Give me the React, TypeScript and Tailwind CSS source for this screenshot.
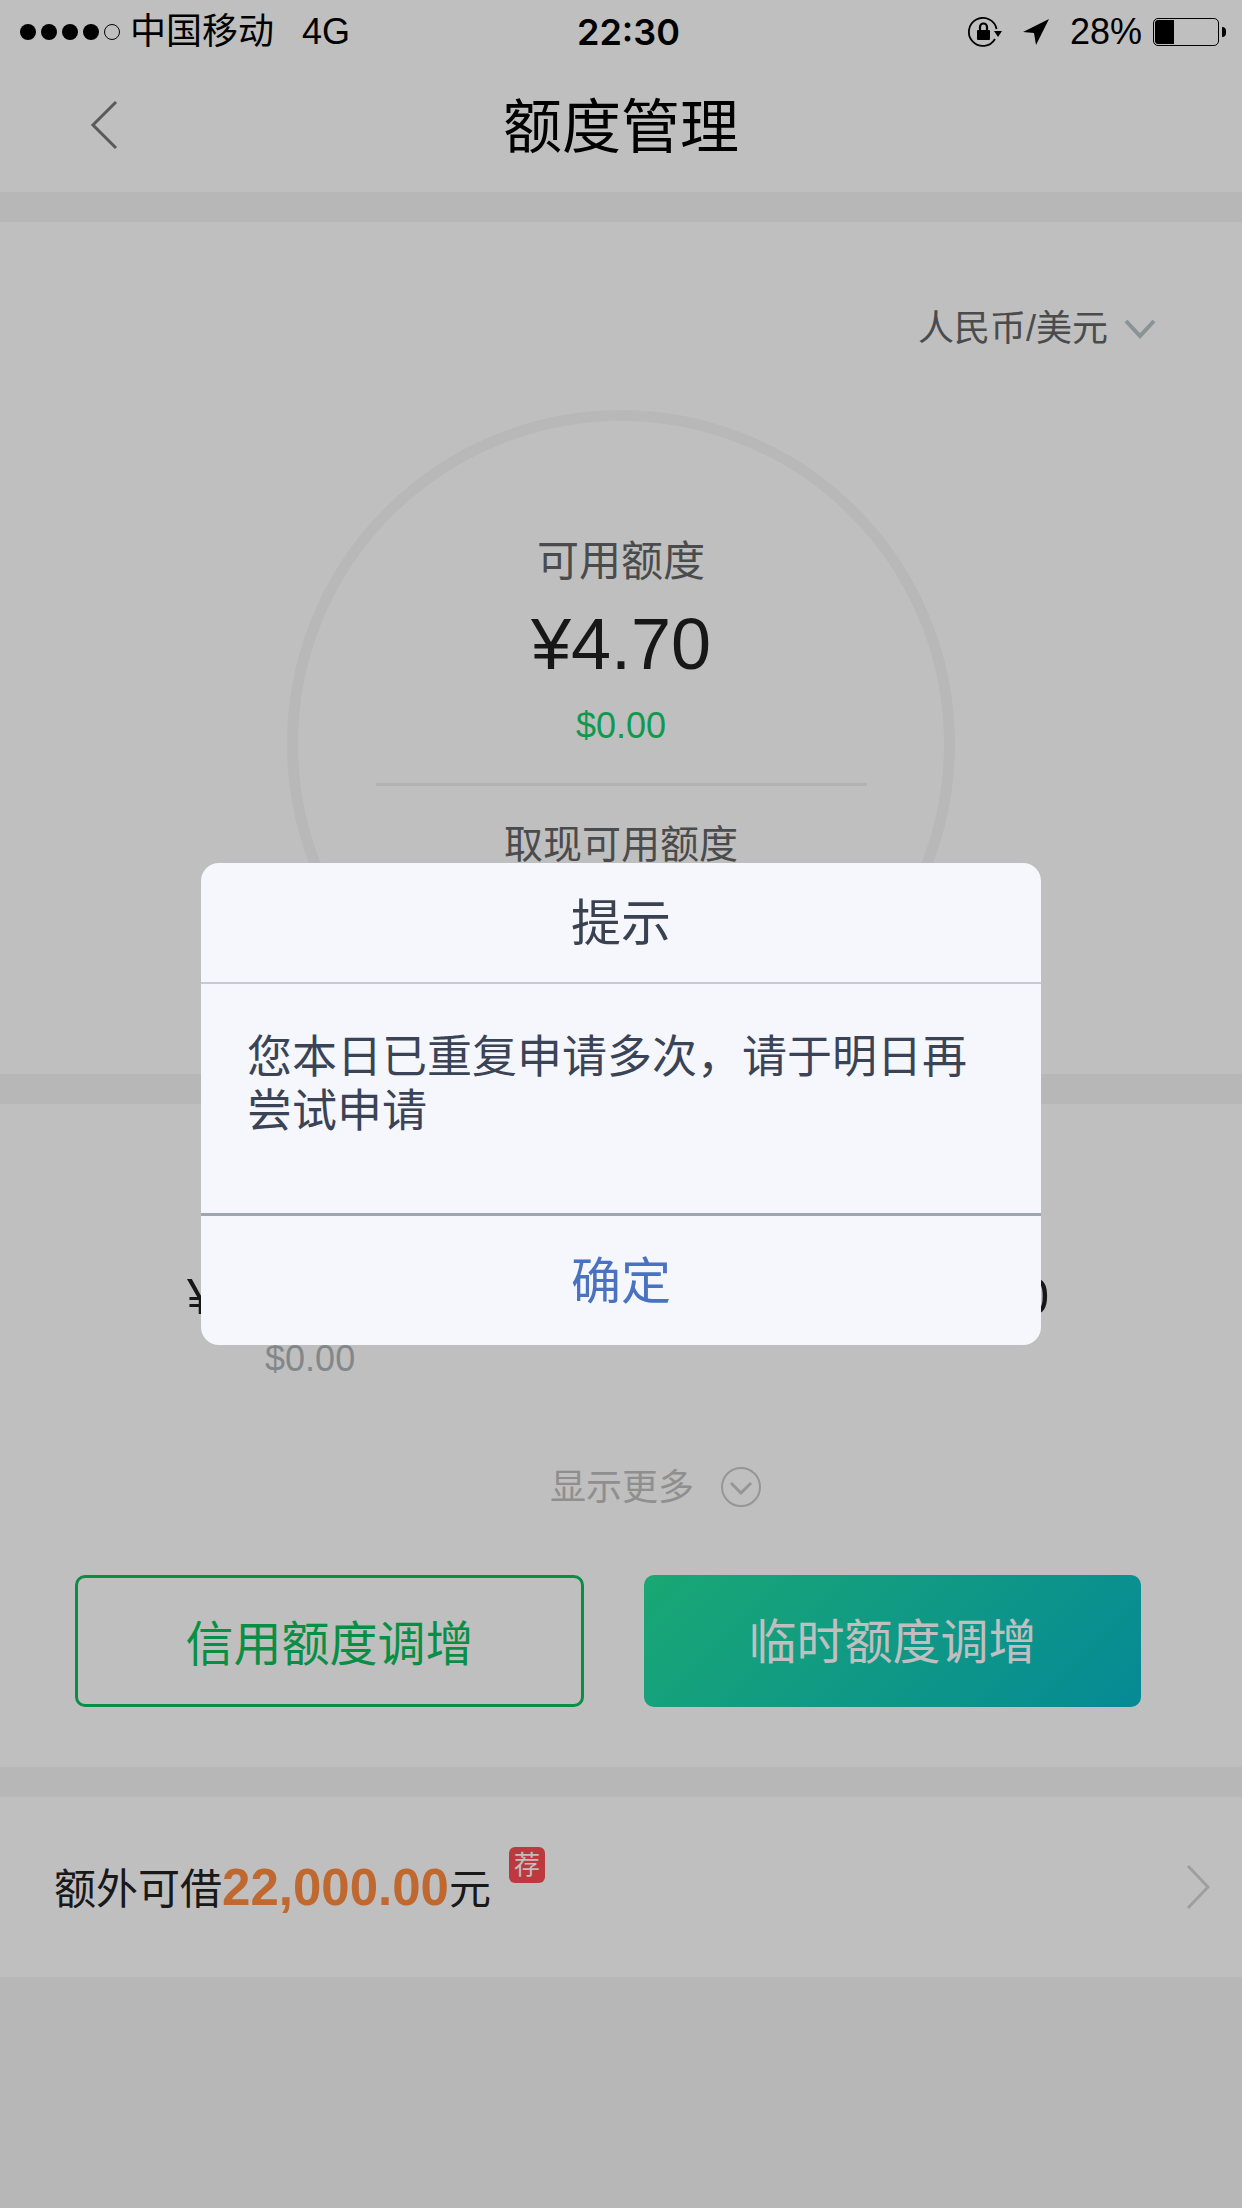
import React from 'react';

const StatusBar: React.FC = () => (
  <div className="flex h-[64px] items-center pl-5 pr-4 text-[36px] leading-[64px] text-black">
    <div className="flex w-[557px] items-center">
      <div className="flex items-center gap-[5px]">
        <span className="h-4 w-4 rounded-full bg-black"></span>
        <span className="h-4 w-4 rounded-full bg-black"></span>
        <span className="h-4 w-4 rounded-full bg-black"></span>
        <span className="h-4 w-4 rounded-full bg-black"></span>
        <span className="h-4 w-4 rounded-full border border-black"></span>
      </div>
      <span className="ml-[10px]">中国移动</span>
      <span className="ml-[28px]">4G</span>
    </div>
    <span className="font-['Inter'] font-semibold">22:30</span>
    <div className="ml-auto flex items-center">
      <svg viewBox="0 0 36 32" className="mt-[1px] h-[32px] w-[36px]">
        <path d="M27 22 A14 14 0 1 1 28.6 12" fill="none" stroke="#000" strokeWidth="1.8" />
        <path d="M26 14 L34 14 L30 20 Z" fill="#000" />
        <rect x="9" y="13" width="13" height="10" rx="1" fill="#000" />
        <path d="M12 13 V10 A3.5 3.5 0 0 1 19 10 V13" fill="none" stroke="#000" strokeWidth="2.2" />
      </svg>
      <svg viewBox="0 0 28 28" className="ml-[18px] h-[28px] w-[28px]">
        <path d="M1 14 L27 1 L14 27 L12 15 Z" fill="#000" />
      </svg>
      <span className="ml-[20px]">28%</span>
      <div className="ml-[11px] h-[28px] w-[66px] rounded-[5px] border border-black p-[1px]">
        <div className="h-full w-[19px] rounded-l-[3px] bg-black"></div>
      </div>
      <div className="ml-[3px] h-[10px] w-[4px] rounded-r-full bg-black"></div>
    </div>
  </div>
);

const App: React.FC = () => {
  return (
    <div className="relative h-[2208px] w-[1242px] overflow-hidden bg-[#f4f4f4] font-['Liberation_Sans','Noto_Sans_CJK_SC',sans-serif]">
      <header className="h-[192px] bg-white">
        <StatusBar />
        <div className="relative flex h-[128px] items-center justify-center">
          <h1 className="text-[59px] leading-[80px] text-black">额度管理</h1>
          <svg viewBox="0 0 28 50" className="absolute left-[90px] top-[36px] h-[50px] w-[28px]">
            <path d="M26 2 L3 25 L26 48" fill="none" stroke="#787878" strokeWidth="3" />
          </svg>
        </div>
      </header>

      <section className="mt-[30px] h-[852px] overflow-hidden bg-white pt-[85px]">
        <div className="flex items-center justify-end pr-[86px]">
          <span className="text-[36px] leading-[44px] text-[#636567]">人民币/美元</span>
          <svg viewBox="0 0 32 20" className="ml-[16px] h-[20px] w-[32px]">
            <path d="M2 2 L16 17 L30 2" fill="none" stroke="#b8c5c8" strokeWidth="4" />
          </svg>
        </div>
        <div className="mx-auto mt-[59px] flex h-[668px] w-[668px] flex-col items-center rounded-full border-[11px] border-[#f6f6f6] pt-[116px]">
          <div className="text-[42px] leading-[50px] text-[#636567]">可用额度</div>
          <div className="mt-[15px] text-[72px] leading-[84px] text-[#1f1f1f]">¥4.70</div>
          <div className="mt-[18px] text-[36px] leading-[44px] text-[#14cd6b]">$0.00</div>
          <div className="mt-[35px] h-[3px] w-[491px] bg-[#eeeeee]"></div>
          <div className="mt-[34px] text-[39px] leading-[50px] text-[#636567]">取现可用额度</div>
        </div>
      </section>

      <section className="mt-[30px] h-[663px] bg-white pt-[163px]">
        <div className="flex justify-between pl-[187px] pr-[193px]">
          <div className="flex flex-col items-center">
            <div className="text-[50px] leading-[60px] text-[#1f1f1f]">¥22,000.00</div>
            <div className="mr-[4px] mt-[10px] text-[36px] leading-[44px] text-[#b1b5b9]">$0.00</div>
          </div>
          <div className="text-[50px] leading-[60px] text-[#1f1f1f]">¥22,000.00</div>
        </div>
        <div className="mt-[86px] flex h-[40px] items-center justify-center pl-[69px]">
          <span className="pt-[2px] text-[36px] leading-[40px] text-[#bfbfbf]">显示更多</span>
          <svg viewBox="0 0 40 40" className="ml-[27px] h-[40px] w-[40px]">
            <circle cx="20" cy="20" r="19" fill="none" stroke="#c8c8c8" strokeWidth="2" />
            <path d="M10 16 L20 26 L30 16" fill="none" stroke="#c8c8c8" strokeWidth="3" />
          </svg>
        </div>
        <div className="mt-[68px] flex pl-[75px]">
          <button className="h-[132px] w-[509px] rounded-[10px] border-[3px] border-[#0dbf5d] pt-[7px] text-[48px] text-[#0dbf5d]">
            信用额度调增
          </button>
          <button className="ml-[60px] h-[132px] w-[497px] rounded-[10px] bg-[linear-gradient(135deg,#23e09b,#08b8c8)] pt-[3px] text-[48px] text-white">
            临时额度调增
          </button>
        </div>
      </section>

      <section className="mt-[30px] flex h-[180px] items-center bg-white pl-[54px] pr-[32px]">
        <span className="mt-[6px] text-[42px] leading-[60px] text-[#222222]">额外可借</span>
        <span className="mt-[2px] text-[51px] font-bold leading-[60px] text-[#ff8c40]">22,000.00</span>
        <span className="mt-[6px] text-[42px] leading-[60px] text-[#222222]">元</span>
        <span className="mb-[44px] ml-[18px] flex h-[36px] w-[36px] items-center justify-center rounded-[6px] bg-[#fc4d55] text-[26px] leading-[36px] text-white">
          荐
        </span>
        <svg viewBox="0 0 24 44" className="ml-auto h-[44px] w-[24px]">
          <path d="M2 1 L22 22 L2 43" fill="none" stroke="#d5d5d5" strokeWidth="3" />
        </svg>
      </section>

      <div className="absolute inset-0 flex items-center justify-center bg-black/25">
        <div className="w-[840px] overflow-hidden rounded-[18px] bg-[#f5f7fd]">
          <div className="flex h-[121px] items-center justify-center border-b-2 border-[#c6cad2] pt-[4px] text-[50px] text-[#3a4252]">
            提示
          </div>
          <div className="h-[232px] border-b-[3px] border-[#9fa6b2] px-[46px] pt-[47px] text-[45px] leading-[54px] text-[#3b4456]">
            {'您本日已重复申请多次\uFF0C请于明日再尝试申请'}
          </div>
          <div className="flex h-[129px] items-center justify-center pt-[4px] text-[50px] text-[#4a72c0]">确定</div>
        </div>
      </div>
    </div>
  );
};

export default App;
